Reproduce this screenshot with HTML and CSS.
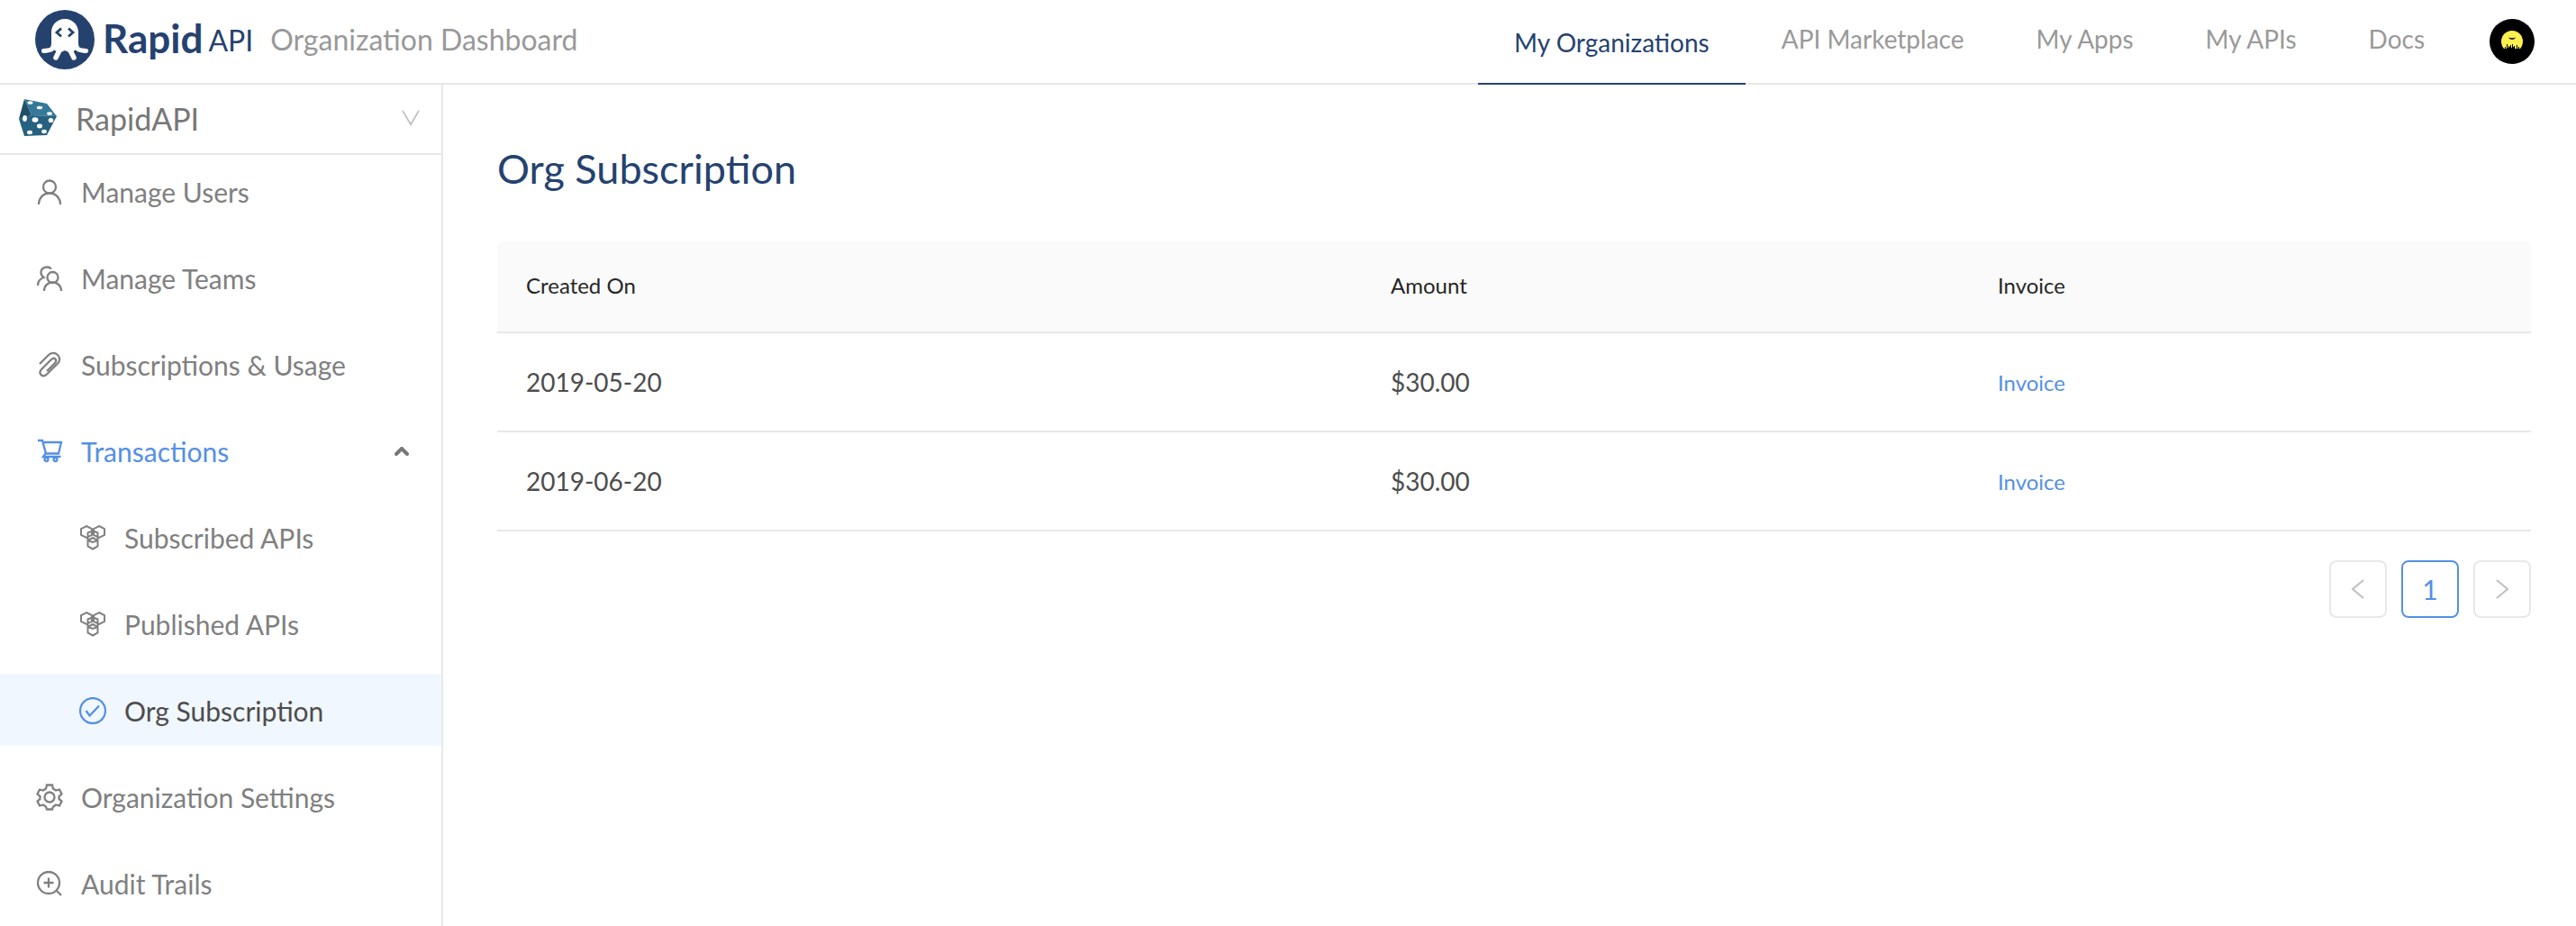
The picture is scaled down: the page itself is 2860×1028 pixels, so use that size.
FILE: index.html
```html
<!DOCTYPE html>
<html lang="en">
<head>
  <meta charset="UTF-8">
  <meta name="viewport" content="width=device-width, initial-scale=1.0">
  <title>Organization Dashboard</title>
  <link rel="stylesheet" href="styles.css">
</head>
<body>
  <header class="topbar">
    <a class="logo" href="#">
      <svg class="logo-mark" viewBox="0 0 68 68">
        <circle cx="34" cy="34" r="33" fill="#25426f"/>
        <path d="M19 43V26c0-8 6-15 15-15s15 7 15 15v17l-8 6-7-3-7 3z" fill="#fff"/>
        <path d="M21 41c0 4-3 5-10.500 5.500M47 41c0 4 3 5 10.500 5.500" fill="none" stroke="#fff" stroke-width="5" stroke-linecap="round"/>
        <path d="M29 44l-5 10M39 44l5 10" fill="none" stroke="#fff" stroke-width="5.500" stroke-linecap="round"/>
        <path d="M30 21.500L25 26l5 4.500M38 21.500l5 4.500-5 4.500" fill="none" stroke="#25426f" stroke-width="2.800"/>
      </svg>
      <span class="logo-rapid">Rapid</span>
      <span class="logo-api">API</span>
    </a>
    <span class="subtitle">Organization Dashboard</span>
    <nav class="topnav">
      <a class="active" href="#">My Organizations</a>
      <a href="#">API Marketplace</a>
      <a href="#">My Apps</a>
      <a href="#">My APIs</a>
      <a href="#">Docs</a>
    </nav>
    <button class="avatar" type="button" aria-label="Account">
      <svg viewBox="0 0 50 50">
        <circle cx="25" cy="25" r="25" fill="#000"/>
        <circle cx="25" cy="25" r="12" fill="#fdf04f"/>
        <path d="M12 40v-8h3v1h2v-2h1v2h1v-5h1v4h1v-2h1v1h1v-2h1v3h1v-4h1v3h1v-1h1v3h2v-4h1v4h1v-2h1v2h3v7z" fill="#000"/>
        <path d="M21 20.500l3 .8 1-.5 1 .5 3-.8c-.5 1.500-2 2.500-4 2.500s-3.500-1-4-2.500z" fill="#222"/>
      </svg>
    </button>
  </header>

  <div class="layout">
    <aside class="sidebar">
      <button class="org-switch" type="button">
        <svg class="dice" viewBox="0 0 42 42">
          <path d="M6 0l25 5 11 14-28-1z" fill="#35799a"/>
          <path d="M14 18l28 1-11 21-25 1-6-19z" fill="#26627f"/>
          <path d="M6 0l8 18-14 4z" fill="#1f5068"/>
          <g fill="#fff">
            <ellipse cx="12.500" cy="4" rx="3" ry="1.800"/>
            <ellipse cx="23" cy="9.500" rx="3.200" ry="1.800"/>
            <ellipse cx="34" cy="16" rx="3" ry="1.800"/>
            <ellipse cx="6.500" cy="21.500" rx="2.400" ry="3.400"/>
            <ellipse cx="18" cy="23" rx="3.400" ry="2.800"/>
            <ellipse cx="35.500" cy="23.500" rx="2.800" ry="2.600"/>
            <ellipse cx="23" cy="30" rx="3" ry="2.400"/>
            <ellipse cx="12" cy="37" rx="3" ry="2.200"/>
            <ellipse cx="28" cy="36" rx="2.800" ry="2.200"/>
          </g>
        </svg>
        <span>RapidAPI</span>
        <svg class="arrow" viewBox="0 0 22 20"><path d="M1 1l10 17L21 1"/></svg>
      </button>

      <nav class="menu">
        <a href="#">
          <svg class="icon" viewBox="0 0 30 30"><circle cx="15" cy="9.500" r="7"/><path d="M3 29c0-7 5-12.500 12-12.500S27 22 27 29"/></svg>
          Manage Users
        </a>
        <a href="#">
          <svg class="icon" viewBox="0 0 30 30"><circle cx="18.500" cy="14" r="6"/><path d="M9 29c0-5.500 4-9.500 9.500-9.500S28 23.500 28 29M17 4.500C13 .5 5.500 3 5.500 8.500c0 2.500 1 4 3 5.500-4 1.500-6.500 4.500-6.500 9"/></svg>
          Manage Teams
        </a>
        <a href="#">
          <svg class="icon" viewBox="0 0 30 30"><path d="M4 14L13.500 4.500c7-7 17 2 10.500 9L12 25.500c-5 4.500-10-1-6-5.500l11-11c3.500-3 7 .5 4 4l-9 9"/></svg>
          Subscriptions &amp; Usage
        </a>
        <a class="open" href="#">
          <svg class="icon" viewBox="0 0 30 30"><path d="M2 3h5l4 14.500h14L28 5H8M10.500 17.500L8 21h19.500"/><circle cx="11.500" cy="24" r="2"/><circle cx="21.500" cy="24" r="2"/></svg>
          Transactions
          <svg class="arrow-up" viewBox="0 0 16 10"><path d="M2 8l6-6 6 6"/></svg>
        </a>
        <a class="sub" href="#">
          <svg class="icon apis" viewBox="0 0 30 30"><path d="M8 2l6 3v7l-6 3-6-3V5zM22 2l6 3v7l-6 3-6-3V5zM15 15l5.500 3v6.500L15 27.500l-5.500-3V18zM9.500 18V9.500L15 7l5.500 2.500V18L15 20z"/></svg>
          Subscribed APIs
        </a>
        <a class="sub" href="#">
          <svg class="icon apis" viewBox="0 0 30 30"><path d="M8 2l6 3v7l-6 3-6-3V5zM22 2l6 3v7l-6 3-6-3V5zM15 15l5.500 3v6.500L15 27.500l-5.500-3V18zM9.500 18V9.500L15 7l5.500 2.500V18L15 20z"/></svg>
          Published APIs
        </a>
        <a class="sub selected" href="#">
          <svg class="icon" viewBox="0 0 30 30"><circle cx="15" cy="15" r="14"/><path d="M7.500 15l4 5.500L22 9.500"/></svg>
          Org Subscription
        </a>
        <a href="#">
          <svg class="icon" viewBox="0 0 30 30"><circle cx="15" cy="15" r="5.500"/><path d="M12 1.500h6l1 4 3 2 4-1 2.500 5-3 2.500v3l3 2.500-2.500 5-4-1-3 2-1 3h-6l-1-3-3-2-4 1-2.500-5 3-2.500v-3l-3-2.500 2.500-5 4 1 3-2z"/></svg>
          Organization Settings
        </a>
        <a href="#">
          <svg class="icon" viewBox="0 0 30 30"><circle cx="14" cy="14" r="12"/><path d="M22.500 22.500L28 28M14 8.500v11M8.500 14h11"/></svg>
          Audit Trails
        </a>
      </nav>
    </aside>

    <main class="content">
      <h1>Org Subscription</h1>
      <table class="invoices">
        <thead>
          <tr>
            <th class="col-date">Created On</th>
            <th class="col-amount">Amount</th>
            <th>Invoice</th>
          </tr>
        </thead>
        <tbody>
          <tr>
            <td>2019-05-20</td>
            <td>$30.00</td>
            <td class="link"><a href="#">Invoice</a></td>
          </tr>
          <tr>
            <td>2019-06-20</td>
            <td>$30.00</td>
            <td class="link"><a href="#">Invoice</a></td>
          </tr>
        </tbody>
      </table>
      <div class="pagination">
        <button type="button" aria-label="Previous page" disabled><svg viewBox="0 0 16 22"><path d="M14 1L2 11l12 10"/></svg></button>
        <button type="button" class="current">1</button>
        <button type="button" aria-label="Next page" disabled><svg viewBox="0 0 16 22"><path d="M2 1l12 10L2 21"/></svg></button>
      </div>
    </main>
  </div>
</body>
</html>
```
FILE: styles.css
```css
* {
  box-sizing: border-box;
}
body {
  margin: 0;
  min-height: 100vh;
  display: flex;
  flex-direction: column;
  font-family: Lato, "Liberation Sans", sans-serif;
  font-size: 28px;
  color: #4d4d4d;
  background-color: #fff;
}
a {
  color: #5590e3;
  text-decoration: none;
}
button {
  font-family: inherit;
  background: none;
  border: none;
  padding: 0;
  cursor: pointer;
}
svg {
  display: block;
  flex: none;
}

/* Top bar */
.topbar {
  display: flex;
  align-items: stretch;
  height: 94px;
  padding: 0 46px 0 38px;
  border-bottom: 2px solid #e8e8e8;
}
.logo {
  display: flex;
  align-items: center;
  height: 88px;
  color: #25426f;
}
.logo-mark {
  width: 68px;
  height: 68px;
}
.logo-rapid {
  margin-left: 8px;
  font-size: 44px;
  line-height: 84px;
  font-weight: 700;
  align-self: flex-start;
}
.logo-api {
  margin-left: 6px;
  font-size: 32px;
}
.subtitle {
  margin-left: 19px;
  font-size: 32px;
  line-height: 88px;
  color: #999;
}
.topnav {
  display: flex;
  margin-left: auto;
}
.topnav a {
  height: 88px;
  padding: 0 40px;
  line-height: 87px;
  color: #999;
}
.topnav .active {
  height: 94px;
  line-height: 95px;
  color: #25426f;
  border-bottom: 2px solid #25426f;
}
.avatar {
  width: 50px;
  margin-left: 32px;
}
.avatar svg {
  width: 50px;
  height: 50px;
}

/* Sidebar */
.layout {
  display: flex;
  flex: 1;
}
.sidebar {
  flex: none;
  width: 492px;
  border-right: 2px solid #e8e8e8;
}
.org-switch {
  display: flex;
  align-items: center;
  width: 100%;
  height: 78px;
  padding: 0 24px 2px 21px;
  font-size: 34px;
  color: #777;
  border-bottom: 2px solid #e8e8e8;
}
.dice {
  width: 42px;
  height: 42px;
  margin-right: 21px;
}
.arrow {
  width: 20px;
  height: 18px;
  margin-left: auto;
  fill: none;
  stroke: #bfbfbf;
  stroke-width: 2;
}
.menu {
  display: flex;
  flex-direction: column;
  gap: 16px;
}
.menu a {
  display: flex;
  align-items: center;
  height: 80px;
  padding: 2px 36px 0 40px;
  font-size: 30px;
  color: #808080;
}
.menu .sub {
  padding-left: 88px;
}
.menu .open {
  color: #5590e3;
}
.menu .selected {
  color: #4d4d4d;
  background-color: #f0f7fe;
}
.icon {
  width: 30px;
  height: 30px;
  margin-right: 20px;
  fill: none;
  stroke: currentColor;
  stroke-width: 2.3;
}
.icon.apis {
  stroke-width: 2;
}
.selected .icon {
  color: #5590e3;
}
.arrow-up {
  width: 16px;
  height: 10px;
  margin-left: auto;
  fill: none;
  stroke: #777;
  stroke-width: 4;
  stroke-linecap: round;
}

/* Content */
.content {
  flex: 1;
  padding: 60px 50px 0 60px;
}
h1 {
  margin: 0;
  font-size: 45px;
  line-height: 66px;
  font-weight: 400;
  color: #25426f;
}
.invoices {
  width: 100%;
  margin-top: 48px;
  border-collapse: separate;
  border-spacing: 0;
  table-layout: fixed;
}
.invoices th,
.invoices td {
  height: 110px;
  padding: 0 32px;
  text-align: left;
  border-bottom: 2px solid #e8e8e8;
}
.invoices th {
  height: 102px;
  padding-bottom: 4px;
  font-size: 24px;
  font-weight: 400;
  color: #262626;
  background-color: #fafafa;
}
.invoices th:first-child {
  border-top-left-radius: 8px;
}
.invoices th:last-child {
  border-top-right-radius: 8px;
}
.invoices .link {
  font-size: 24px;
}
.col-date {
  width: 960px;
}
.col-amount {
  width: 674px;
}
.pagination {
  display: flex;
  justify-content: flex-end;
  gap: 16px;
  margin-top: 32px;
}
.pagination button {
  display: flex;
  align-items: center;
  justify-content: center;
  width: 64px;
  height: 64px;
  border: 2px solid #e8e8e8;
  border-radius: 8px;
}
.pagination .current {
  font-size: 30px;
  color: #5590e3;
  border-color: #5590e3;
}
.pagination svg {
  width: 16px;
  height: 22px;
  fill: none;
  stroke: #bfbfbf;
  stroke-width: 2;
}
```
